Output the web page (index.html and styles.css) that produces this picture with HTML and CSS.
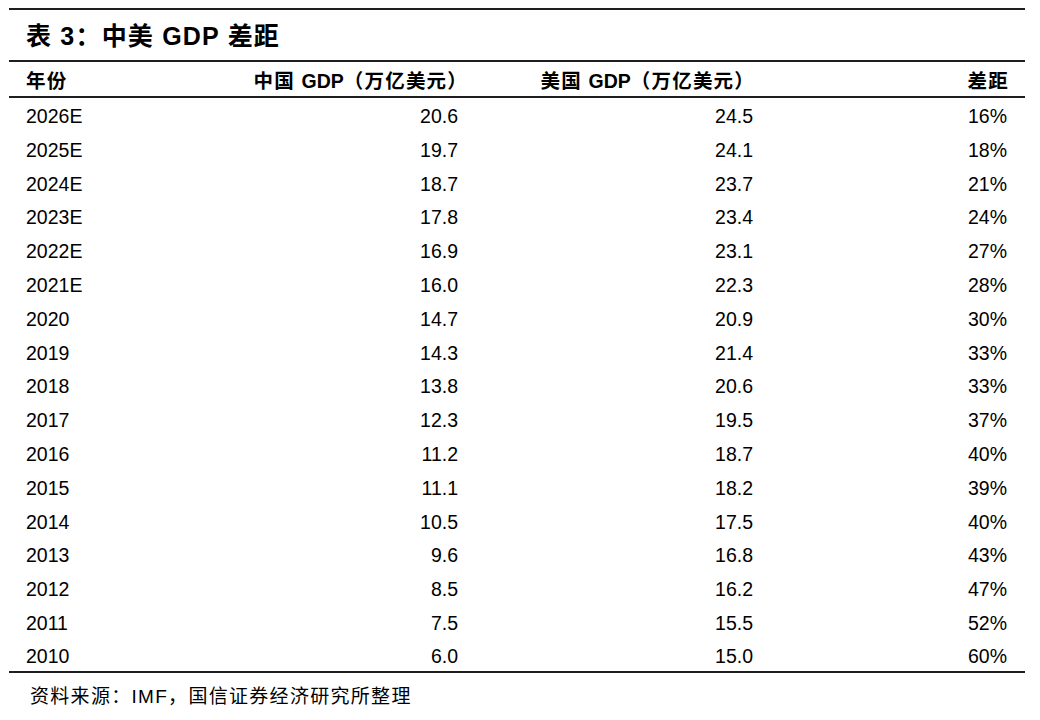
FILE: index.html
```html
<!DOCTYPE html>
<html lang="zh-CN">
<head>
<meta charset="utf-8">
<title>表 3：中美 GDP 差距</title>
<link rel="stylesheet" href="styles.css">
</head>
<body>
<div class="page">
  <div class="title">表 3：中美 GDP 差距</div>
  <table class="data">
    <colgroup>
      <col class="c1"><col class="c2"><col class="c3"><col class="c4">
    </colgroup>
    <thead>
      <tr>
        <th class="left">年份</th>
        <th class="right cn-head">中国 <span class="latin">GDP</span>（万亿美元）</th>
        <th class="right">美国 <span class="latin">GDP</span>（万亿美元）</th>
        <th class="right">差距</th>
      </tr>
    </thead>
    <tbody>
      <tr><td>2026E</td><td>20.6</td><td>24.5</td><td>16%</td></tr>
      <tr><td>2025E</td><td>19.7</td><td>24.1</td><td>18%</td></tr>
      <tr><td>2024E</td><td>18.7</td><td>23.7</td><td>21%</td></tr>
      <tr><td>2023E</td><td>17.8</td><td>23.4</td><td>24%</td></tr>
      <tr><td>2022E</td><td>16.9</td><td>23.1</td><td>27%</td></tr>
      <tr><td>2021E</td><td>16.0</td><td>22.3</td><td>28%</td></tr>
      <tr><td>2020</td><td>14.7</td><td>20.9</td><td>30%</td></tr>
      <tr><td>2019</td><td>14.3</td><td>21.4</td><td>33%</td></tr>
      <tr><td>2018</td><td>13.8</td><td>20.6</td><td>33%</td></tr>
      <tr><td>2017</td><td>12.3</td><td>19.5</td><td>37%</td></tr>
      <tr><td>2016</td><td>11.2</td><td>18.7</td><td>40%</td></tr>
      <tr><td>2015</td><td>11.1</td><td>18.2</td><td>39%</td></tr>
      <tr><td>2014</td><td>10.5</td><td>17.5</td><td>40%</td></tr>
      <tr><td>2013</td><td>9.6</td><td>16.8</td><td>43%</td></tr>
      <tr><td>2012</td><td>8.5</td><td>16.2</td><td>47%</td></tr>
      <tr><td>2011</td><td>7.5</td><td>15.5</td><td>52%</td></tr>
      <tr><td>2010</td><td>6.0</td><td>15.0</td><td>60%</td></tr>
    </tbody>
  </table>
  <div class="source">资料来源：IMF，国信证券经济研究所整理</div>
</div>
</body>
</html>
```

FILE: styles.css
```css
html, body {
  margin: 0;
  padding: 0;
  background: #ffffff;
}

body {
  font-family: "Liberation Sans", Arial, "Noto Sans CJK SC", sans-serif;
  color: #000000;
}

.page {
  width: 1016px;
  margin-left: 9px;
  padding-top: 8px;
}

.title {
  box-sizing: border-box;
  height: 54px;
  border-top: 2px solid #1e1e1e;
  border-bottom: 2px solid #1e1e1e;
  padding-left: 17px;
  padding-bottom: 3px;
  display: flex;
  align-items: center;
  font-size: 25px;
  font-weight: bold;
  letter-spacing: 1.2px;
}

.data {
  width: 1016px;
  border-collapse: separate;
  border-spacing: 0;
  table-layout: fixed;
}

.c1 { width: 200px; }
.c2 { width: 267px; }
.c3 { width: 295px; }
.c4 { width: 254px; }

.data th {
  box-sizing: border-box;
  height: 36px;
  padding: 1px 18px 0 17px;
  font-size: 19.5px;
  font-weight: bold;
  letter-spacing: 1.2px;
  border-bottom: 2px solid #1e1e1e;
  white-space: nowrap;
}

.data th .latin { letter-spacing: 0; }

.data th.left { text-align: left; }
.data th.right { text-align: right; padding-right: 16px; }
.data th.cn-head { padding-right: 8px; }

.data td {
  box-sizing: border-box;
  height: 33.82px;
  padding: 3px 18px 0 17px;
  font-size: 19.5px;
  text-align: right;
  white-space: nowrap;
}

.data td:first-child { text-align: left; }

.data tbody tr:last-child td {
  border-bottom: 2px solid #1e1e1e;
}

.source {
  padding-left: 21px;
  padding-top: 11px;
  font-size: 19px;
  line-height: 26px;
  letter-spacing: 1.3px;
}
```
